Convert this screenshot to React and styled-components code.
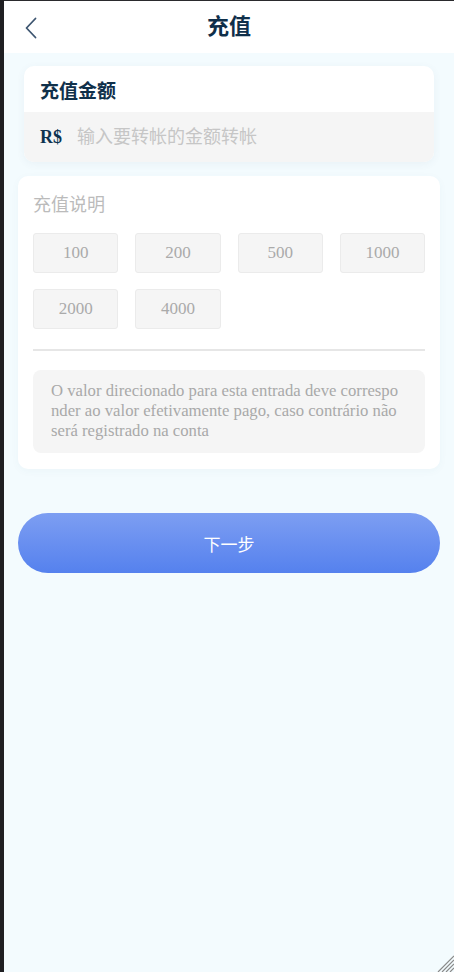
import React from "react";
import styled, { createGlobalStyle } from "styled-components";

const Global = createGlobalStyle`
  html, body { margin: 0; padding: 0; background: #1f1f22; }
  body { font-family: "Liberation Serif", "Noto Sans CJK SC", serif; }
  * { box-sizing: border-box; }
`;

const Frame = styled.div`
  position: relative;
  min-height: 972px;
  margin-left: 4px;
  border-top: 1px solid #2a2a2d;
  background: #f3fbfe;
  display: flex;
  flex-direction: column;
`;

const Header = styled.header`
  height: 52px;
  background: #ffffff;
  display: flex;
  align-items: center;
  justify-content: center;
  position: relative;
`;

const BackBtn = styled.button`
  position: absolute;
  left: 15px;
  top: 15px;
  width: 24px;
  height: 24px;
  padding: 0;
  border: none;
  background: transparent;
  display: flex;
  align-items: center;
  justify-content: center;
`;

const Title = styled.h1`
  margin: 0;
  font-size: 22px;
  font-weight: 700;
  color: #0f2f4a;
  line-height: 52px;
`;

const Main = styled.main`
  display: flex;
  flex-direction: column;
  padding: 13px 0 0;
`;

const AmountCard = styled.section`
  margin: 0 20px;
  background: #ffffff;
  border-radius: 10px;
  overflow: hidden;
  box-shadow: 0 2px 8px rgba(60, 90, 120, 0.06);
`;

const CardTitle = styled.div`
  height: 46px;
  display: flex;
  align-items: center;
  padding: 0 16px;
  font-size: 19px;
  font-weight: 700;
  color: #10304a;
`;

const InputRow = styled.div`
  height: 50px;
  background: #f5f5f5;
  display: flex;
  align-items: center;
  padding: 0 16px;
  gap: 15px;
`;

const Currency = styled.span`
  font-size: 18px;
  font-weight: 700;
  color: #0d3350;
`;

const AmountInput = styled.input`
  flex: 1;
  border: none;
  outline: none;
  background: transparent;
  font-family: "Liberation Serif", "Noto Sans CJK SC", serif;
  font-size: 18px;
  color: #333;
  padding: 0;
  &::placeholder { color: #c6c6c6; }
`;

const InfoCard = styled.section`
  margin: 14px 14px 0;
  background: #ffffff;
  border-radius: 10px;
  padding: 16px 15px 16px;
  box-shadow: 0 2px 8px rgba(60, 90, 120, 0.04);
`;

const InfoTitle = styled.div`
  font-size: 18px;
  line-height: 26px;
  color: #bbbbbb;
`;

const PresetGrid = styled.div`
  margin-top: 15px;
  display: grid;
  grid-template-columns: repeat(4, 1fr);
  column-gap: 17px;
  row-gap: 16px;
`;

const Preset = styled.button`
  height: 40px;
  border: 1px solid #ebebeb;
  border-radius: 3px;
  background: #f5f5f5;
  font-family: "Liberation Serif", serif;
  font-size: 17px;
  color: #aaaaaa;
  padding: 0;
`;

const Divider = styled.hr`
  margin: 20px 0 0;
  border: none;
  height: 2px;
  background: #e6e6e6;
`;

const Note = styled.p`
  margin: 19px 0 0;
  background: #f5f5f5;
  border-radius: 8px;
  padding: 11px 20px 12px 18px;
  font-size: 16.7px;
  line-height: 20px;
  color: #a9a9a9;
  word-break: break-all;
`;

const NextButton = styled.button`
  margin: 44px 14px 0;
  height: 60px;
  border: none;
  border-radius: 30px;
  background: linear-gradient(180deg, #7d9ef2 0%, #5581ee 100%);
  color: #ffffff;
  font-family: "Liberation Serif", "Noto Sans CJK SC", serif;
  font-size: 17px;
`;

const Grip = styled.svg`
  position: absolute;
  right: 0;
  bottom: 0;
`;

const amounts = [100, 200, 500, 1000, 2000, 4000];

export default function App() {
  return (
    <>
      <Global />
      <Frame>
        <Header>
          <BackBtn aria-label="back">
            <svg width="14" height="22" viewBox="0 0 14 22">
              <path d="M11.5 1.5 L2.5 11 L11.5 20.5" fill="none" stroke="#3d5570" strokeWidth="1.8" strokeLinecap="round" strokeLinejoin="round" />
            </svg>
          </BackBtn>
          <Title>充值</Title>
        </Header>
        <Main>
          <AmountCard>
            <CardTitle>充值金额</CardTitle>
            <InputRow>
              <Currency>R$</Currency>
              <AmountInput placeholder="输入要转帐的金额转帐" />
            </InputRow>
          </AmountCard>
          <InfoCard>
            <InfoTitle>充值说明</InfoTitle>
            <PresetGrid>
              {amounts.map((a) => (
                <Preset key={a}>{a}</Preset>
              ))}
            </PresetGrid>
            <Divider />
            <Note>
              O valor direcionado para esta entrada deve corresponder ao valor efetivamente pago, caso contrário não será registrado na conta
            </Note>
          </InfoCard>
          <NextButton>下一步</NextButton>
        </Main>
        <Grip width="18" height="18" viewBox="0 0 18 18">
          <path d="M18 2 L2 18 M18 6 L6 18 M18 10 L10 18 M18 14 L14 18" stroke="#8a8a8a" strokeWidth="1.2" />
        </Grip>
      </Frame>
    </>
  );
}
